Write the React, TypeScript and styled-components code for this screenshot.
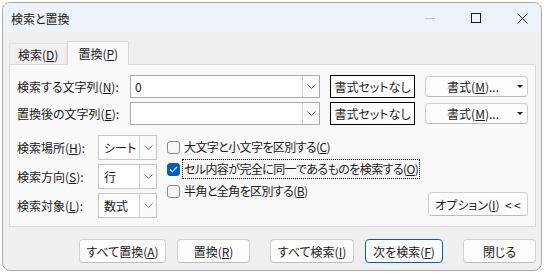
import React from "react";
import styled, { createGlobalStyle } from "styled-components";

const GlobalStyle = createGlobalStyle`
  html, body {
    margin: 0;
    padding: 0;
    background: #ffffff;
  }
  body {
    font-family: "Noto Sans CJK JP", "Noto Sans", sans-serif;
    font-size: 12px;
    color: #1b1b1b;
    font-feature-settings: "palt";
  }
`;

function Chevron() {
  return (
    <svg width="9" height="5" viewBox="0 0 9 5">
      <polyline points="0.5,0.5 4.5,4.5 8.5,0.5" fill="none" stroke="#707070" strokeWidth="1" />
    </svg>
  );
}

function Combo({ value, width }: { value: string; width: number }) {
  return (
    <ComboBox $width={width}>
      <ComboText>{value}</ComboText>
      <ComboButton>
        <Chevron />
      </ComboButton>
    </ComboBox>
  );
}

function App() {
  return (
    <>
      <GlobalStyle />
      <Window>
        <TitleBar>
          <Title>検索と置換</Title>
          <Controls>
            <Control>
              <svg width="10" height="1" viewBox="0 0 10 1">
                <rect width="10" height="1" fill="#c4c4c4" />
              </svg>
            </Control>
            <Control>
              <svg width="10" height="10" viewBox="0 0 10 10">
                <rect x="0.5" y="0.5" width="9" height="9" fill="none" stroke="#1b1b1b" strokeWidth="1" />
              </svg>
            </Control>
            <Control>
              <svg width="11" height="11" viewBox="0 0 11 11">
                <path d="M0.5 0.5 L10.5 10.5 M10.5 0.5 L0.5 10.5" stroke="#1b1b1b" strokeWidth="1" />
              </svg>
            </Control>
          </Controls>
        </TitleBar>

        <Body>
          <Tabs>
            <Tab>
              検索(<u>D</u>)
            </Tab>
            <Tab $active>
              置換(<u>P</u>)
            </Tab>
          </Tabs>

          <Panel>
            <FieldGrid>
              <Label>
                検索する文字列(<u>N</u>):
              </Label>
              <TextBox>
                <TextValue>0</TextValue>
                <ComboButton>
                  <Chevron />
                </ComboButton>
              </TextBox>
              <FormatPreview>書式セットなし</FormatPreview>
              <FormatButton>
                <span>
                  書式(<u>M</u>)...
                </span>
                <Caret />
              </FormatButton>

              <Label>
                置換後の文字列(<u>E</u>):
              </Label>
              <TextBox>
                <TextValue />
                <ComboButton>
                  <Chevron />
                </ComboButton>
              </TextBox>
              <FormatPreview>書式セットなし</FormatPreview>
              <FormatButton>
                <span>
                  書式(<u>M</u>)...
                </span>
                <Caret />
              </FormatButton>
            </FieldGrid>

            <Options>
              <SelectGrid>
                <Label>
                  検索場所(<u>H</u>):
                </Label>
                <Combo value="シート" width={59} />
                <Label>
                  検索方向(<u>S</u>):
                </Label>
                <Combo value="行" width={59} />
                <Label>
                  検索対象(<u>L</u>):
                </Label>
                <Combo value="数式" width={59} />
              </SelectGrid>

              <CheckList>
                <CheckRow>
                  <Box />
                  <CheckLabel>
                    大文字と小文字を区別する(<u>C</u>)
                  </CheckLabel>
                </CheckRow>
                <CheckRow>
                  <Box $checked>
                    <svg width="9" height="7" viewBox="0 0 9 7">
                      <polyline points="1,3.5 3.3,5.8 8,1" fill="none" stroke="#fff" strokeWidth="1.1" />
                    </svg>
                  </Box>
                  <CheckLabel $focused>
                    セル内容が完全に同一であるものを検索する(<u>O</u>)
                  </CheckLabel>
                </CheckRow>
                <CheckRow>
                  <Box />
                  <CheckLabel>
                    半角と全角を区別する(<u>B</u>)
                  </CheckLabel>
                </CheckRow>
              </CheckList>

              <OptionButton>
                オプション(<u>I</u>)&nbsp; &lt;&thinsp;&lt;
              </OptionButton>
            </Options>
          </Panel>

          <ButtonRow>
            <Button $width={87}>
              すべて置換(<u>A</u>)
            </Button>
            <Button $width={73} $gap={11}>
              置換(<u>R</u>)
            </Button>
            <Button $width={84} $gap={20}>
              すべて検索(<u>I</u>)
            </Button>
            <Button $width={78} $gap={11} $primary>
              次を検索(<u>F</u>)
            </Button>
            <Button $width={73} $gap={20}>
              閉じる
            </Button>
          </ButtonRow>
        </Body>
      </Window>
    </>
  );
}

const Window = styled.div`
  margin: 2px;
  width: 540px;
  height: 269px;
  box-sizing: border-box;
  border: 1px solid #a8a8a8;
  border-radius: 8px;
  overflow: hidden;
  background: #f0f0f0;
  display: flex;
  flex-direction: column;
`;

const TitleBar = styled.div`
  height: 30px;
  flex-shrink: 0;
  background: #eef2f9;
  display: flex;
  align-items: center;
`;

const Title = styled.div`
  flex: 1;
  min-width: 0;
  padding-left: 8px;
`;

const Controls = styled.div`
  display: flex;
  flex-shrink: 0;
  margin-right: -4px;
`;

const Control = styled.div`
  width: 46px;
  height: 30px;
  display: flex;
  align-items: center;
  justify-content: center;
`;

const Body = styled.div`
  flex: 1;
  padding: 8px 5px 0 6px;
  display: flex;
  flex-direction: column;
`;

const Tabs = styled.div`
  display: flex;
  align-items: flex-end;
  height: 23px;
`;

const Tab = styled.div<{ $active?: boolean }>`
  height: ${(p) => (p.$active ? 24 : 21)}px;
  box-sizing: border-box;
  padding: 0 ${(p) => (p.$active ? 10 : 8)}px;
  display: flex;
  align-items: center;
  border: 1px solid ${(p) => (p.$active ? "#d9d9d9" : "#e3e3e3")};
  border-bottom: none;
  background: ${(p) => (p.$active ? "#f9f9f9" : "#f0f0f0")};
  margin-bottom: ${(p) => (p.$active ? -1 : 0)}px;
  position: relative;
  z-index: ${(p) => (p.$active ? 1 : 0)};
`;

const Panel = styled.div`
  width: 527px;
  height: 163px;
  box-sizing: border-box;
  border: 1px solid #dadada;
  background: #f9f9f9;
  padding: 10px 6px 0 7px;
`;

const FieldGrid = styled.div`
  display: grid;
  grid-template-columns: 103px 190px 85px 103px;
  grid-auto-rows: 23px;
  column-gap: 10px;
  row-gap: 4px;
  align-items: center;
`;

const Label = styled.div`
  white-space: nowrap;
`;

const TextBox = styled.div`
  height: 23px;
  box-sizing: border-box;
  border: 1px solid #a9a9a9;
  background: #ffffff;
  display: flex;
`;

const TextValue = styled.div`
  flex: 1;
  padding-left: 4px;
  display: flex;
  align-items: center;
`;

const ComboButton = styled.div`
  width: 17px;
  box-sizing: border-box;
  border-left: 1px solid #d4d4d4;
  background: #fbfbfb;
  display: flex;
  align-items: center;
  justify-content: center;
`;

const FormatPreview = styled.div`
  height: 23px;
  box-sizing: border-box;
  border: 1px solid #000000;
  background: #ffffff;
  display: flex;
  align-items: center;
  justify-content: center;
`;

const FormatButton = styled.div`
  height: 21px;
  box-sizing: border-box;
  border: 1px solid #d1d1d1;
  border-bottom-color: #bdbdbd;
  border-radius: 4px;
  background: #fdfdfd;
  display: flex;
  align-items: center;
  justify-content: flex-end;
  gap: 18px;
  padding-right: 4px;
`;

const Caret = styled.span`
  width: 0;
  height: 0;
  border-left: 3px solid transparent;
  border-right: 3px solid transparent;
  border-top: 3px solid #1b1b1b;
`;

const Options = styled.div`
  display: flex;
  margin-top: 10px;
`;

const SelectGrid = styled.div`
  display: grid;
  grid-template-columns: 81px 59px;
  grid-auto-rows: 24px;
  row-gap: 5px;
  align-items: center;
`;

const ComboBox = styled.div<{ $width: number }>`
  width: ${(p) => p.$width}px;
  height: 25px;
  box-sizing: border-box;
  border: 1px solid #c6c6c6;
  background: #ffffff;
  display: flex;
`;

const ComboText = styled.div`
  flex: 1;
  padding-left: 5px;
  display: flex;
  align-items: center;
`;

const CheckList = styled.div`
  display: flex;
  flex-direction: column;
  margin: 1px 0 0 10px;
`;

const CheckRow = styled.div`
  height: 22px;
  display: flex;
  align-items: center;
  gap: 2px;
`;

const Box = styled.div<{ $checked?: boolean }>`
  width: 13px;
  height: 13px;
  box-sizing: border-box;
  border-radius: 3px;
  border: 1px solid ${(p) => (p.$checked ? "#005fb8" : "#8a8a8a")};
  background: ${(p) => (p.$checked ? "#005fb8" : "#f6f6f6")};
  display: flex;
  align-items: center;
  justify-content: center;
`;

const CheckLabel = styled.span<{ $focused?: boolean }>`
  padding: 0 1px;
  line-height: 18px;
  letter-spacing: -0.6px;
  border: 1px dotted ${(p) => (p.$focused ? "#000000" : "transparent")};
  white-space: nowrap;
`;

const OptionButton = styled.div`
  margin-left: auto;
  margin-right: 1px;
  align-self: flex-end;
  width: 100px;
  height: 24px;
  box-sizing: border-box;
  border: 1px solid #d1d1d1;
  border-bottom-color: #bdbdbd;
  border-radius: 4px;
  background: #fdfdfd;
  display: flex;
  align-items: center;
  justify-content: center;
  margin-bottom: 1px;
  white-space: nowrap;
`;

const ButtonRow = styled.div`
  display: flex;
  justify-content: flex-end;
  margin-top: 12px;
`;

const Button = styled.div<{ $width: number; $gap?: number; $primary?: boolean }>`
  width: ${(p) => p.$width}px;
  margin-left: ${(p) => p.$gap ?? 0}px;
  height: 24px;
  box-sizing: border-box;
  border: 1px solid ${(p) => (p.$primary ? "#005fb8" : "#d1d1d1")};
  border-bottom-color: ${(p) => (p.$primary ? "#005fb8" : "#bdbdbd")};
  border-radius: 4px;
  background: #fdfdfd;
  display: flex;
  align-items: center;
  justify-content: center;
  white-space: nowrap;
`;

export default App;
